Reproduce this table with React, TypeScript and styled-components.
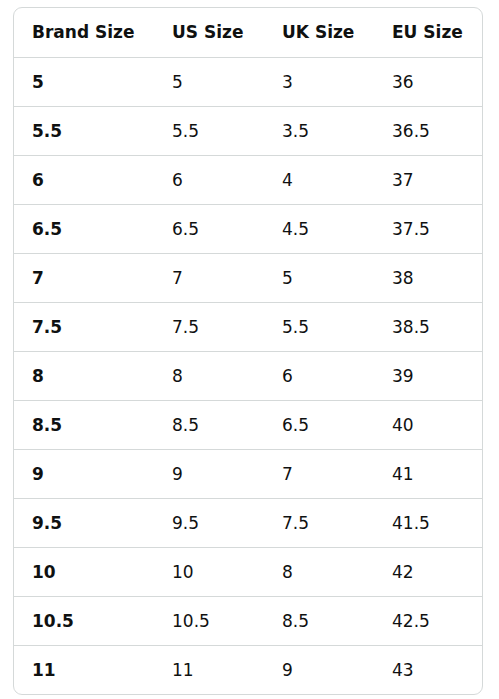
import React from "react";
import styled, { createGlobalStyle } from "styled-components";

const Global = createGlobalStyle`
  html, body { margin: 0; padding: 0; background: #fff; }
  body { font-family: "DejaVu Sans", "Noto Sans", sans-serif; color: #0f1111; }
`;

const Wrap = styled.div`
  padding: 7px 0 0 13px;
`;

const Card = styled.div`
  width: 468px;
  border: 1px solid #d5d9d9;
  border-radius: 9px;
  overflow: hidden;
`;

const Table = styled.table`
  width: 468px;
  border-collapse: collapse;
  table-layout: fixed;
`;

const Row = styled.tr<{ $last?: boolean }>`
  height: 49px;
  border-bottom: ${(p) => (p.$last ? "none" : "1px solid #d5d9d9")};
`;

const Th = styled.th<{ $w: number }>`
  box-sizing: border-box;
  width: ${(p) => p.$w}px;
  text-align: left;
  padding: 0 0 0 18px;
  font-size: 17px;
  font-weight: 700;
  color: #0f1111;
  white-space: nowrap;
`;

const Td = styled.td<{ $bold?: boolean }>`
  box-sizing: border-box;
  padding: 0 0 0 18px;
  font-size: 17px;
  font-weight: ${(p) => (p.$bold ? 700 : 400)};
  color: #0f1111;
`;

const cols = [
  { label: "Brand Size", w: 140 },
  { label: "US Size", w: 110 },
  { label: "UK Size", w: 110 },
  { label: "EU Size", w: 108 },
];

const rows = [
  ["5", "5", "3", "36"],
  ["5.5", "5.5", "3.5", "36.5"],
  ["6", "6", "4", "37"],
  ["6.5", "6.5", "4.5", "37.5"],
  ["7", "7", "5", "38"],
  ["7.5", "7.5", "5.5", "38.5"],
  ["8", "8", "6", "39"],
  ["8.5", "8.5", "6.5", "40"],
  ["9", "9", "7", "41"],
  ["9.5", "9.5", "7.5", "41.5"],
  ["10", "10", "8", "42"],
  ["10.5", "10.5", "8.5", "42.5"],
  ["11", "11", "9", "43"],
];

export default function App() {
  return (
    <>
      <Global />
      <Wrap>
        <Card>
          <Table>
            <thead>
              <Row>
                {cols.map((c) => (
                  <Th key={c.label} $w={c.w}>
                    {c.label}
                  </Th>
                ))}
              </Row>
            </thead>
            <tbody>
              {rows.map((r, i) => (
                <Row key={i} $last={i === rows.length - 1}>
                  {r.map((v, j) => (
                    <Td key={j} $bold={j === 0}>
                      {v}
                    </Td>
                  ))}
                </Row>
              ))}
            </tbody>
          </Table>
        </Card>
      </Wrap>
    </>
  );
}
